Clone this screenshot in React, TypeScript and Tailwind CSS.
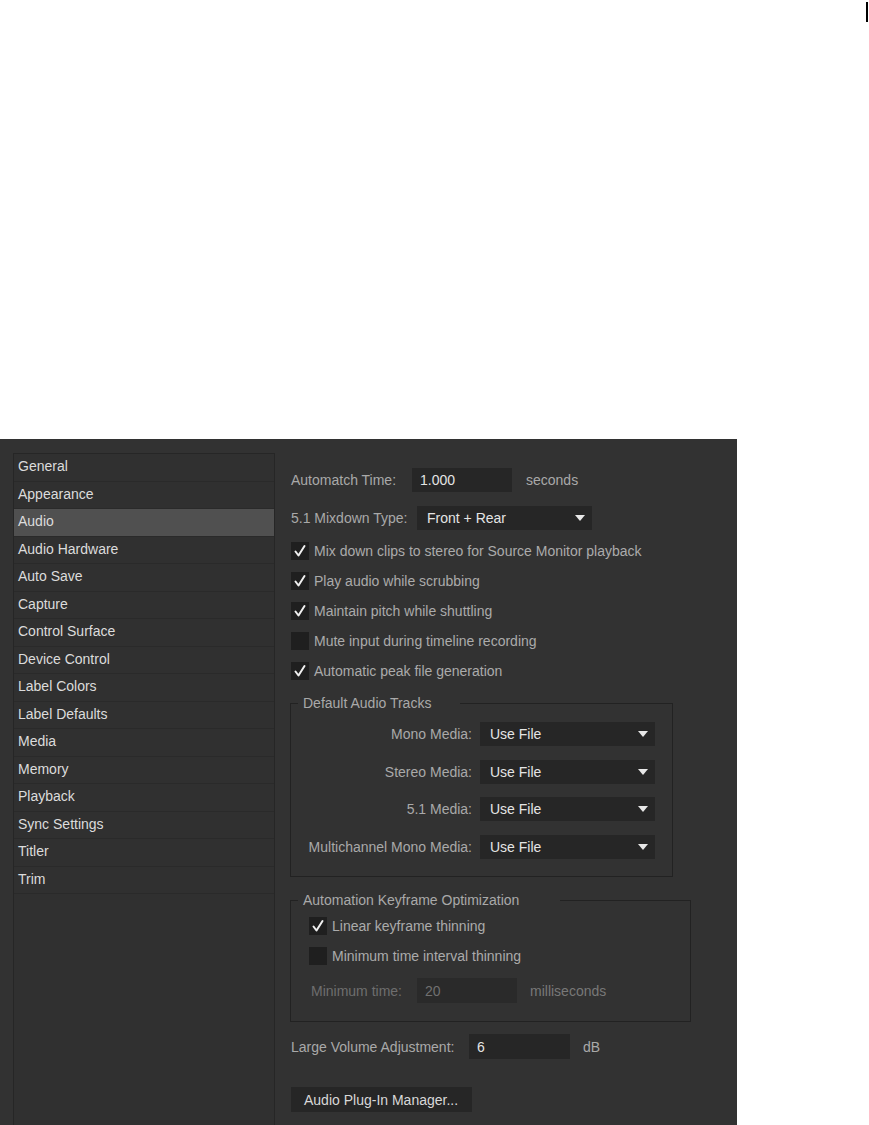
import React from "react";

const items = [
  "General",
  "Appearance",
  "Audio",
  "Audio Hardware",
  "Auto Save",
  "Capture",
  "Control Surface",
  "Device Control",
  "Label Colors",
  "Label Defaults",
  "Media",
  "Memory",
  "Playback",
  "Sync Settings",
  "Titler",
  "Trim",
];

function Arrow() {
  return (
    <svg width="10" height="6" viewBox="0 0 10 6">
      <polygon points="0,0 10,0 5,6" fill="#e8e8e8" />
    </svg>
  );
}

function Select({ value, w }: { value: string; w: string }) {
  return (
    <div className={`${w} h-[24px] bg-[#262626] flex items-center pl-[10px] pr-[7px] text-[#e4e4e4]`}>
      <span className="flex-1">{value}</span>
      <Arrow />
    </div>
  );
}

function Check({ checked, label }: { checked?: boolean; label: string }) {
  return (
    <div className="h-[30px] flex items-center gap-[5px]">
      <div className="w-[18px] h-[18px] bg-[#1f1f1f] flex items-center justify-center">
        {checked && (
          <svg width="14" height="14" viewBox="0 0 14 14">
            <path
              d="M2.5 7.5 L5.5 11.5 L11.5 2"
              stroke="#f0f0f0"
              strokeWidth="2"
              fill="none"
              strokeLinecap="round"
              strokeLinejoin="round"
            />
          </svg>
        )}
      </div>
      <span className="text-[#ababab]">{label}</span>
    </div>
  );
}

function Sidebar() {
  return (
    <div className="w-[262px] self-stretch border border-b-0 border-[#262626] bg-[#303030]">
      {items.map((it) => (
        <div
          key={it}
          className={`h-[27.5px] flex items-center pl-[4px] pb-[2px] border-b border-[#2a2a2a] text-[#dcdcdc] ${
            it === "Audio" ? "bg-[#505050]" : ""
          }`}
        >
          {it}
        </div>
      ))}
    </div>
  );
}

function Settings() {
  return (
    <div className="ml-[16px] pt-[15px] flex flex-col text-[#a9a9a9]">
      <div className="h-[24px] flex items-center">
        <span className="w-[121px]">Automatch Time:</span>
        <div className="w-[100px] h-[24px] bg-[#262626] flex items-center pl-[8px] text-[#e4e4e4]">1.000</div>
        <span className="ml-[14px]">seconds</span>
      </div>
      <div className="mt-[14px] h-[24px] flex items-center">
        <span className="w-[126px]">5.1 Mixdown Type:</span>
        <Select value="Front + Rear" w="w-[175px]" />
      </div>
      <div className="mt-[6px]">
        <Check checked label="Mix down clips to stereo for Source Monitor playback" />
        <Check checked label="Play audio while scrubbing" />
        <Check checked label="Maintain pitch while shuttling" />
        <Check label="Mute input during timeline recording" />
        <Check checked label="Automatic peak file generation" />
      </div>

      <fieldset className="mt-[9px] -ml-[1px] w-[383px] border border-[#222222]">
        <legend className="ml-[7px] pl-[5px] pr-[29px] leading-[16px] text-[#a9a9a9]">Default Audio Tracks</legend>
        <div className="pt-[11px] pb-[17.5px] grid grid-cols-[181px_175px] gap-x-[8px] gap-y-[13.5px]">
          {["Mono Media:", "Stereo Media:", "5.1 Media:", "Multichannel Mono Media:"].map((l) => (
            <React.Fragment key={l}>
              <span className="h-[24px] flex items-center justify-end">{l}</span>
              <Select value="Use File" w="w-[175px]" />
            </React.Fragment>
          ))}
        </div>
      </fieldset>

      <fieldset className="mt-[15px] -ml-[1px] w-[401px] border border-[#222222]">
        <legend className="ml-[7px] pl-[5px] pr-[41px] leading-[16px] text-[#a9a9a9]">
          Automation Keyframe Optimization
        </legend>
        <div className="pt-[3px] pb-[18px] pl-[18px]">
          <Check checked label="Linear keyframe thinning" />
          <Check label="Minimum time interval thinning" />
          <div className="mt-[7px] h-[25px] flex items-center pl-[2px] text-[#6e6e6e]">
            <span className="w-[106px]">Minimum time:</span>
            <div className="w-[100px] h-[25px] bg-[#2a2a2a] flex items-center pl-[8px] text-[#707070]">20</div>
            <span className="ml-[13px] text-[#787878]">milliseconds</span>
          </div>
        </div>
      </fieldset>

      <div className="mt-[12px] h-[25px] flex items-center">
        <span className="w-[178px]">Large Volume Adjustment:</span>
        <div className="w-[101px] h-[25px] bg-[#262626] flex items-center pl-[8px] text-[#e4e4e4]">6</div>
        <span className="ml-[13px]">dB</span>
      </div>

      <button className="mt-[28px] w-[181px] h-[25px] bg-[#262626] pl-[13px] text-left text-[#d8d8d8]">
        Audio Plug-In Manager...
      </button>
    </div>
  );
}

export default function App() {
  return (
    <div className="w-[869px] h-[1125px] bg-white flex flex-col overflow-hidden font-['Liberation_Sans',Arial,sans-serif] text-[14px] leading-[16px]">
      <div className="h-[439px] shrink-0 flex justify-end items-start pr-[1px]">
        <div className="w-[2px] h-[20px] mt-[2px] bg-black" />
      </div>
      <div className="w-[737px] flex-1 bg-[#323232] flex pt-[14px] pl-[13px] overflow-hidden">
        <Sidebar />
        <Settings />
      </div>
    </div>
  );
}
